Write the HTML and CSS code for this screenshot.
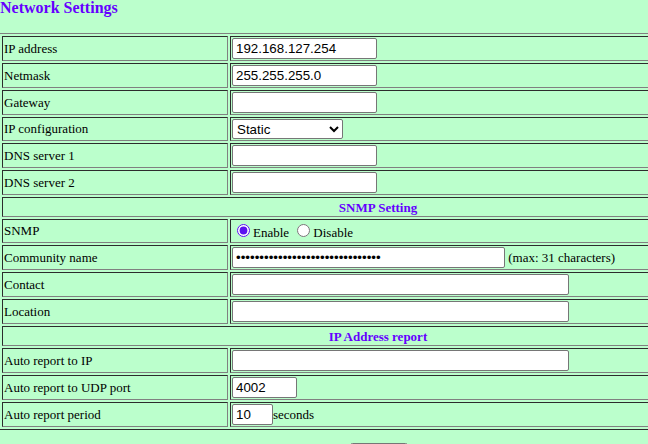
FILE: index.html
```html
<!DOCTYPE html>
<html>
<head>
<meta charset="utf-8">
<title>Network Settings</title>
<link rel="stylesheet" href="styles.css">
</head>
<body>
<div class="page">
  <div class="title">Network Settings</div>
  <form class="settings">
    <table class="grid">
      <colgroup><col class="col-label"><col></colgroup>
      <tr><td class="label">IP address</td><td><input class="txt w145" type="text" value="192.168.127.254"></td></tr>
      <tr><td class="label">Netmask</td><td><input class="txt w145" type="text" value="255.255.255.0"></td></tr>
      <tr><td class="label">Gateway</td><td><input class="txt w145" type="text" value=""></td></tr>
      <tr><td class="label">IP configuration</td><td><select class="sel"><option>Static</option><option>DHCP</option><option>BOOTP</option></select></td></tr>
      <tr><td class="label">DNS server 1</td><td><input class="txt w145" type="text" value=""></td></tr>
      <tr><td class="label">DNS server 2</td><td><input class="txt w145" type="text" value=""></td></tr>
      <tr class="hdr"><td colspan="2" class="section">SNMP Setting</td></tr>
      <tr class="radio-row"><td class="label">SNMP</td><td class="label"><input class="rad" type="radio" name="snmp" checked>Enable <input class="rad" type="radio" name="snmp">Disable</td></tr>
      <tr><td class="label">Community name</td><td class="label"><input class="txt w273" type="password" value="publicpublicpublicpublicpublicp"> (max: 31 characters)</td></tr>
      <tr><td class="label">Contact</td><td><input class="txt w337" type="text" value=""></td></tr>
      <tr><td class="label">Location</td><td><input class="txt w337" type="text" value=""></td></tr>
      <tr class="hdr"><td colspan="2" class="section">IP Address report</td></tr>
      <tr><td class="label">Auto report to IP</td><td><input class="txt w337" type="text" value=""></td></tr>
      <tr><td class="label">Auto report to UDP port</td><td><input class="txt w65" type="text" value="4002"></td></tr>
      <tr><td class="label">Auto report period</td><td class="label"><input class="txt w41" type="text" value="10">seconds</td></tr>
    </table>
    <div class="actions"><button class="btn" type="button">Submit</button></div>
  </form>
</div>
</body>
</html>
```
FILE: styles.css
```css
html, body {
  margin: 0;
  padding: 0;
  background: #bbffcc;
  overflow: hidden;
}
body {
  font-family: "Liberation Serif", "Times New Roman", serif;
  font-size: 13px;
  color: #000;
}
.page {
  width: 758px;
}
.title {
  font-size: 16px;
  font-weight: bold;
  color: #6600ff;
  line-height: 16px;
  margin-bottom: 17px;
}
.settings {
  margin: 0;
}
.grid {
  width: 758px;
  margin-left: -1px;
  table-layout: fixed;
  border: 1px outset grey;
  border-spacing: 2px;
}
.col-label {
  width: 226px;
}
.grid td {
  border: 1px inset grey;
  padding: 1px;
  font-size: 13px;
  vertical-align: middle;
  white-space: nowrap;
}
.hdr {
  height: 20px;
}
.radio-row {
  height: 23px;
}
.section {
  text-align: center;
  font-weight: bold;
  color: #6600ff;
  line-height: 15px;
}
.txt {
  box-sizing: border-box;
  height: 21px;
  margin: 0;
  padding: 1px 3px;
  border: 1px solid #767676;
  border-radius: 2px;
  background: #fff;
  font-family: "Liberation Sans", Arial, sans-serif;
  font-size: 13.33px;
  color: #000;
  vertical-align: baseline;
}
.w145 { width: 145px; }
.w273 { width: 273px; }
.w337 { width: 337px; }
.w65 { width: 65px; }
.w41 { width: 41px; }
.sel {
  display: block;
  box-sizing: border-box;
  width: 111px;
  height: 20px;
  margin: 0;
  font-family: "Liberation Sans", Arial, sans-serif;
  font-size: 13.33px;
  color: #000;
  background: #fff;
  border: 1px solid #767676;
  border-radius: 2px;
}
.rad {
  margin: 3px 3px 0 5px;
  accent-color: #5a10f0;
}
.actions {
  text-align: center;
  margin-top: 13px;
}
.btn {
  width: 58px;
  height: 22px;
  font-family: "Liberation Sans", Arial, sans-serif;
  font-size: 13.33px;
}
```
